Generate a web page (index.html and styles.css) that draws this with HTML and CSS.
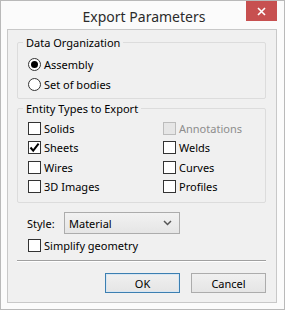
FILE: index.html
```html
<!DOCTYPE html>
<html lang="en">
<head>
    <meta charset="UTF-8">
    <title>Export Parameters</title>
    <link rel="stylesheet" href="styles.css">
</head>
<body>

<div class="window">
    <div class="titlebar">
        <span></span>
        <span class="title">Export Parameters</span>
        <button class="close-btn" aria-label="Close">
            <svg width="9" height="9" viewBox="0 0 9 9"><path d="M1 1 L8 8 M8 1 L1 8" stroke="#fff" stroke-width="1.6"/></svg>
        </button>
    </div>

    <div class="client">
        <!-- Data organization -->
        <fieldset class="group group-org">
            <legend>Data Organization</legend>
            <label class="opt"><span class="radio checked"></span>Assembly</label>
            <label class="opt"><span class="radio"></span>Set of bodies</label>
        </fieldset>

        <!-- Entity types -->
        <fieldset class="group group-types">
            <legend>Entity Types to Export</legend>
            <div class="grid">
                <label class="opt"><span class="check"></span>Solids</label>
                <label class="opt disabled"><span class="check"></span>Annotations</label>
                <label class="opt"><span class="check"><svg width="11" height="11" viewBox="0 0 11 11"><path d="M1.5 5.5 L4.2 8.6 L9.6 1.6" fill="none" stroke="#000" stroke-width="2"/></svg></span>Sheets</label>
                <label class="opt"><span class="check"></span>Welds</label>
                <label class="opt"><span class="check"></span>Wires</label>
                <label class="opt"><span class="check"></span>Curves</label>
                <label class="opt"><span class="check"></span>3D Images</label>
                <label class="opt"><span class="check"></span>Profiles</label>
            </div>
        </fieldset>

        <div class="style-row">
            <span>Style:</span>
            <div class="combo">
                <span>Material</span>
                <svg width="9" height="6" viewBox="0 0 9 6"><path d="M1 1 L4.5 4.5 L8 1" fill="none" stroke="#555" stroke-width="1.5"/></svg>
            </div>
        </div>
        <label class="opt simplify"><span class="check"></span>Simplify geometry</label>

        <div class="separator"></div>

        <div class="buttons">
            <button class="btn default">OK</button>
            <button class="btn">Cancel</button>
        </div>
    </div>
</div>

</body>
</html>
```

FILE: styles.css
```css
body {
    margin: 0;
    font-family: "Noto Sans", "Open Sans", sans-serif;
    font-size: 11px;
    color: #000;
    background: #fff;
}
.window {
    box-sizing: border-box;
    width: 285px;
    height: 310px;
    border: 1px solid #b9b9b9;
    background: #fbfbfb;
    padding: 0 7px 0 6px;
}
.titlebar {
    height: 28px;
    display: grid;
    grid-template-columns: 1fr auto 1fr;
    align-items: start;
}
.title {
    font-size: 14px;
    color: #2b2b2b;
    margin-top: 6px;
    padding-left: 4px;
}
.close-btn {
    justify-self: end;
    width: 31px;
    height: 20px;
    border: none;
    padding: 0;
    background: #c75050;
    display: flex;
    align-items: center;
    justify-content: center;
}
.client {
    box-sizing: border-box;
    height: 274px;
    border: 1px solid #c8c8c8;
    background: #f0f0f0;
    padding: 5px 10px 0 9px;
}
.group {
    margin: 0;
    border: 1px solid #dcdcdc;
    border-radius: 2px;
    padding: 0 8px 0 10px;
}
.group legend {
    padding: 0 3px;
    margin-left: -5px;
    line-height: 15px;
}
.group-org {
    height: 58px;
    padding-top: 4px;
}
.group-types {
    margin-top: 2px;
    height: 97px;
    padding-top: 3px;
}
.opt {
    display: flex;
    align-items: center;
    height: 20px;
    white-space: nowrap;
}
.grid {
    display: grid;
    grid-template-columns: 135px 1fr;
    grid-auto-rows: 19.3px;
}
.grid .opt {
    height: 19.3px;
}
.radio {
    box-sizing: border-box;
    width: 13px;
    height: 13px;
    border: 1px solid #333;
    border-radius: 50%;
    background: #fff;
    margin-right: 3px;
    display: flex;
    align-items: center;
    justify-content: center;
}
.radio.checked::after {
    content: "";
    width: 7px;
    height: 7px;
    border-radius: 50%;
    background: #000;
}
.check {
    box-sizing: border-box;
    width: 13px;
    height: 13px;
    border: 1px solid #333;
    background: #fff;
    margin-right: 3px;
    display: flex;
    align-items: center;
    justify-content: center;
}
.disabled {
    color: #8d8d8d;
}
.disabled .check {
    border-color: #bcbcbc;
    background: #e6e6e6;
}
.style-row {
    display: flex;
    align-items: center;
    margin-top: 9px;
    padding-left: 10px;
}
.style-row > span {
    width: 37px;
}
.combo {
    box-sizing: border-box;
    width: 116px;
    height: 22px;
    border: 1px solid #acacac;
    background: linear-gradient(#f2f2f2, #e5e5e5);
    display: flex;
    align-items: center;
    justify-content: space-between;
    padding: 0 7px 0 4px;
}
.simplify {
    padding-left: 11px;
    margin-top: 1px;
}
.separator {
    margin-top: 5px;
    border-top: 1px solid #a0a0a0;
    border-bottom: 1px solid #fff;
}
.buttons {
    display: flex;
    justify-content: flex-end;
    gap: 11px;
    margin-top: 11px;
}
.btn {
    box-sizing: border-box;
    width: 75px;
    height: 20px;
    font: inherit;
    border: 1px solid #acacac;
    background: linear-gradient(#f0f0f0, #e5e5e5);
    padding: 0;
}
.btn.default {
    border-color: #3c7fb1;
    box-shadow: inset 0 0 0 1px #d8e6f2;
}
```
